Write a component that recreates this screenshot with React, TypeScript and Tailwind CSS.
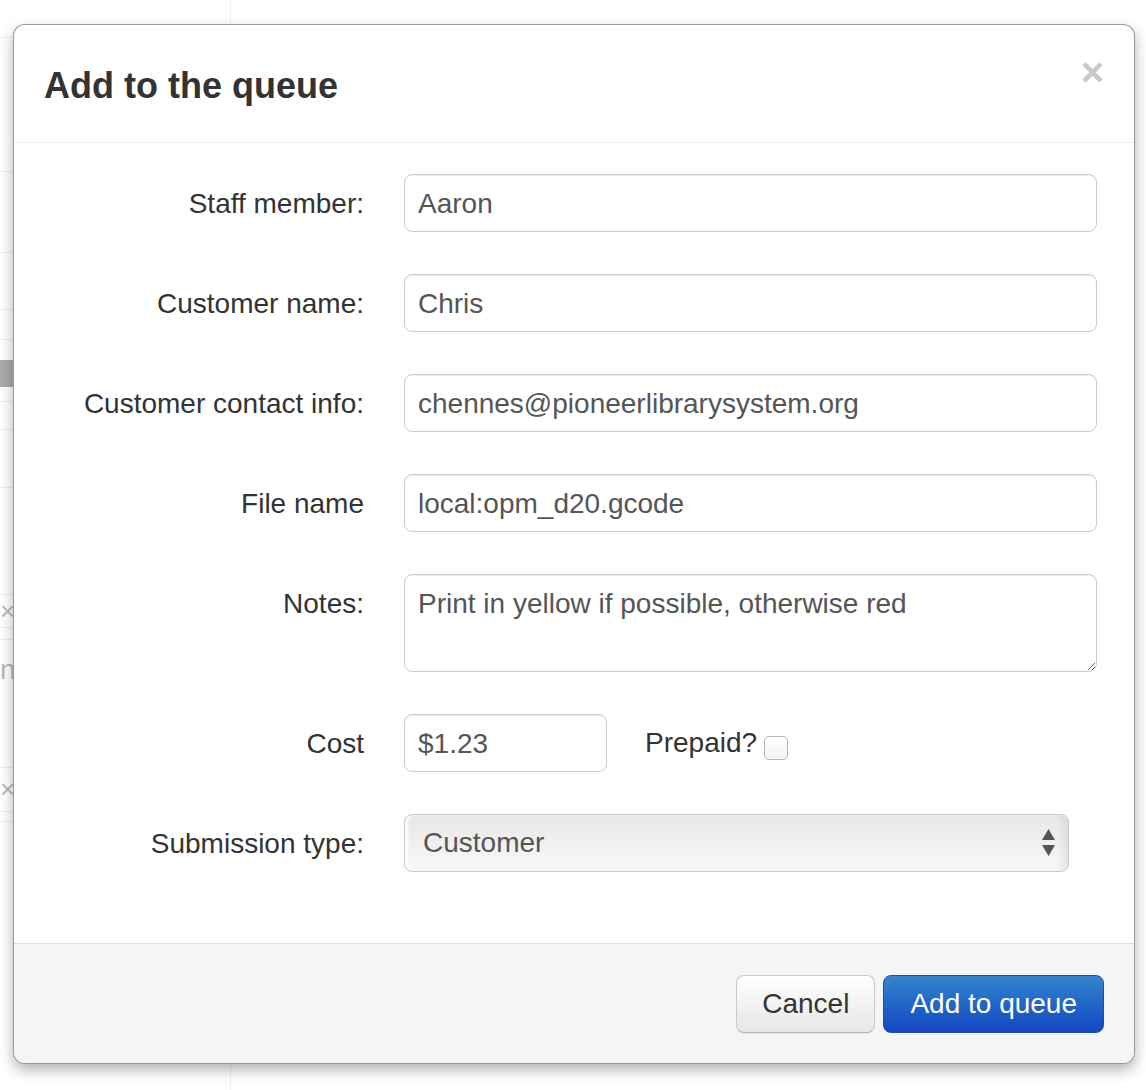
import { useState } from 'react';

const font = { fontFamily: '"Liberation Sans", Arial, Helvetica, sans-serif' };

function Row({ label, children, top }: { label: string; children: React.ReactNode; top?: boolean }) {
  return (
    <div className={`flex ${top ? 'items-start' : 'items-center'}`}>
      <label className="w-[320px] h-[58px] flex items-center justify-end text-[28px] text-[#333] shrink-0 pt-[1px]">
        {label}
      </label>
      <div className="ml-[40px] flex items-center">{children}</div>
    </div>
  );
}

const inputCls =
  'h-[58px] border border-[#cccccc] rounded-[8px] bg-white px-[13px] pt-[1px] text-[28px] text-[#555] outline-none shadow-[inset_0_1px_1px_rgba(0,0,0,0.075)]';

export default function App() {
  const [staff, setStaff] = useState('Aaron');
  const [customer, setCustomer] = useState('Chris');
  const [contact, setContact] = useState('chennes@pioneerlibrarysystem.org');
  const [file, setFile] = useState('local:opm_d20.gcode');
  const [notes, setNotes] = useState('Print in yellow if possible, otherwise red');
  const [cost, setCost] = useState('$1.23');
  const [prepaid, setPrepaid] = useState(false);

  return (
    <div className="relative w-[1146px] h-[1090px] bg-white overflow-hidden" style={font}>
      {/* page behind the dialog */}
      <div className="flex h-full">
        <div className="w-[231px] h-full border-r border-[#eeeeee] flex flex-col text-[#bbb]">
          <div className="h-[38px] border-b border-[#eeeeee]" />
          <div className="h-[134px] border-b border-[#eeeeee]" />
          <div className="h-[81px] border-b border-[#eeeeee]" />
          <div className="h-[57px] border-b border-[#eeeeee]" />
          <div className="h-[30px] border-b border-[#eeeeee]" />
          <div className="h-[20px]" />
          <div className="h-[27px] bg-[#aaaaaa]" />
          <div className="h-[15px] border-b border-[#eeeeee]" />
          <div className="h-[28px] border-b border-[#eeeeee]" />
          <div className="h-[58px] border-b border-[#eeeeee]" />
          <div className="h-[107px] border-b border-[#eeeeee]" />
          <div className="h-[33px] border-b border-[#eeeeee] text-[26px] leading-none pt-[3px]">×</div>
          <div className="h-[12px] border-b border-[#eeeeee]" />
          <div className="h-[128px] border-b border-[#eeeeee] pt-[16px] text-[28px] leading-none">nn</div>
          <div className="h-[44px] border-b border-[#eeeeee] text-[26px] leading-none pt-[8px]">×</div>
          <div className="h-[10px] border-b border-[#eeeeee]" />
        </div>
      </div>

      {/* dialog */}
      <div className="absolute left-[13px] top-[24px] w-[1122px] bg-white border border-black/40 rounded-[12px] shadow-[0_6px_14px_rgba(0,0,0,0.3)] overflow-hidden">
        <div className="h-[118px] border-b border-[#eeeeee] px-[30px] flex justify-between items-center">
          <h3 className="text-[36px] font-bold text-[#333] leading-none mt-[4px]">Add to the queue</h3>
          <button className="self-start mt-[27px] text-[40px] font-bold leading-[40px] text-[#c8c8c8]">×</button>
        </div>

        <div className="pt-[31px] pb-[71px] px-[30px] flex flex-col gap-[42px]">
          <Row label="Staff member:">
            <input className={`${inputCls} w-[693px]`} value={staff} onChange={(e) => setStaff(e.target.value)} />
          </Row>
          <Row label="Customer name:">
            <input className={`${inputCls} w-[693px]`} value={customer} onChange={(e) => setCustomer(e.target.value)} />
          </Row>
          <Row label="Customer contact info:">
            <input className={`${inputCls} w-[693px]`} value={contact} onChange={(e) => setContact(e.target.value)} />
          </Row>
          <Row label="File name">
            <input className={`${inputCls} w-[693px]`} value={file} onChange={(e) => setFile(e.target.value)} />
          </Row>
          <Row label="Notes:" top>
            <textarea
              className="w-[693px] h-[98px] border border-[#cccccc] rounded-[8px] bg-white px-[13px] py-[13px] text-[28px] leading-[32px] text-[#555] outline-none resize-y shadow-[inset_0_1px_1px_rgba(0,0,0,0.075)]"
              value={notes}
              onChange={(e) => setNotes(e.target.value)}
            />
          </Row>
          <Row label="Cost">
            <input className={`${inputCls} w-[203px]`} value={cost} onChange={(e) => setCost(e.target.value)} />
            <label className="ml-[38px] flex items-center text-[28px] text-[#333]">
              Prepaid?
              <span
                onClick={() => setPrepaid(!prepaid)}
                className="ml-[7px] mt-[10px] w-[24px] h-[24px] rounded-[5px] border border-[#b5b5b5] bg-gradient-to-b from-white to-[#f3f3f3] flex items-center justify-center text-[18px] text-[#333]"
              >
                {prepaid ? '✓' : ''}
              </span>
            </label>
          </Row>
          <Row label="Submission type:">
            <div className="relative w-[665px] h-[58px]">
              <select className="appearance-none w-full h-full border border-[#c8c8c8] rounded-[8px] bg-gradient-to-b from-[#e7e7e7] to-[#f8f8f8] pl-[18px] text-[28px] text-[#555] outline-none shadow-[inset_3px_0_3px_rgba(255,255,255,0.9),inset_-8px_0_8px_-4px_rgba(0,0,0,0.08)]">
                <option>Customer</option>
                <option>Staff</option>
              </select>
              <svg className="absolute right-[14px] top-[15px] pointer-events-none" width="13" height="27" viewBox="0 0 13 27">
                <path d="M6.5 0 L13 11 L0 11 Z" fill="#555" />
                <path d="M0 16 L13 16 L6.5 27 Z" fill="#555" />
              </svg>
            </div>
          </Row>
        </div>

        <div className="h-[120px] border-t border-[#dddddd] bg-[#f5f5f5] px-[30px] flex items-center justify-end gap-[8px]">
          <button className="h-[58px] px-[25px] rounded-[8px] border border-[#c9c9c9] border-b-[#b3b3b3] bg-gradient-to-b from-white to-[#e6e6e6] text-[28px] text-[#333] shadow-[inset_0_1px_0_rgba(255,255,255,0.2),0_1px_2px_rgba(0,0,0,0.05)]">
            Cancel
          </button>
          <button className="h-[58px] px-[26px] rounded-[8px] border border-[#1b4cb0] bg-gradient-to-b from-[#3584cc] to-[#1646c2] text-[28px] text-white">
            Add to queue
          </button>
        </div>
      </div>
    </div>
  );
}
